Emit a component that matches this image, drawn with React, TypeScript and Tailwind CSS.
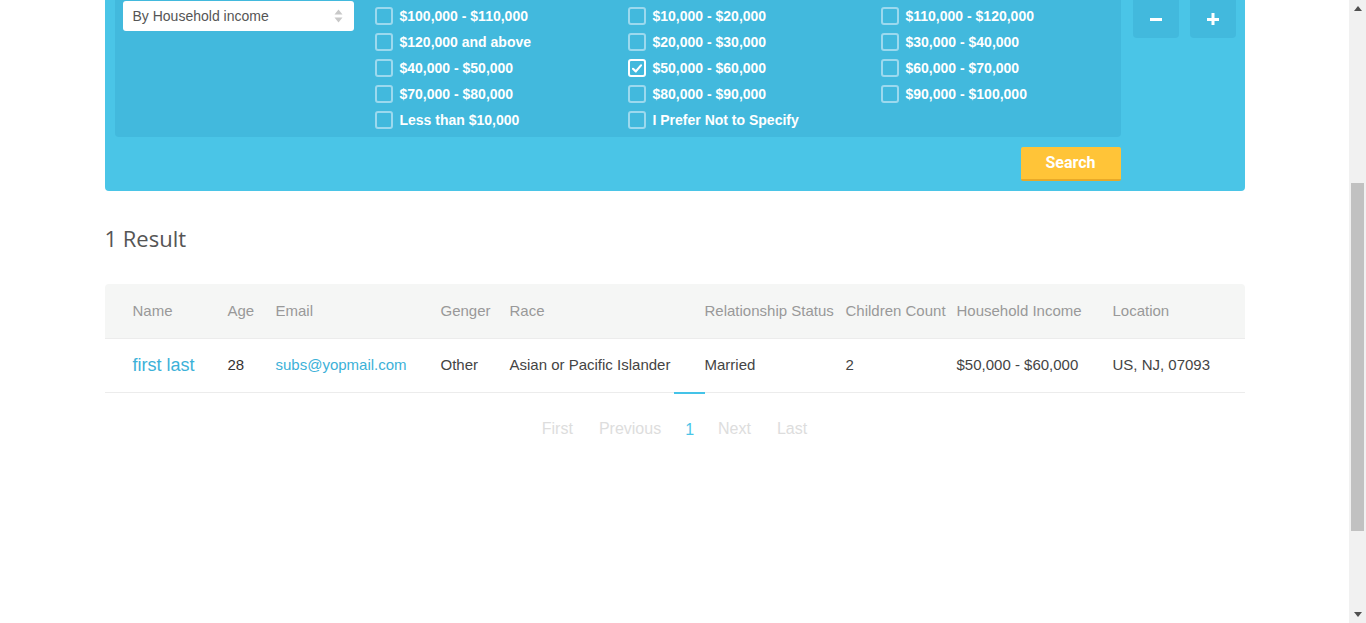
import React from 'react'

const INCOME_OPTIONS: { label: string; checked?: boolean }[] = [
  { label: '$100,000 - $110,000' },
  { label: '$10,000 - $20,000' },
  { label: '$110,000 - $120,000' },
  { label: '$120,000 and above' },
  { label: '$20,000 - $30,000' },
  { label: '$30,000 - $40,000' },
  { label: '$40,000 - $50,000' },
  { label: '$50,000 - $60,000', checked: true },
  { label: '$60,000 - $70,000' },
  { label: '$70,000 - $80,000' },
  { label: '$80,000 - $90,000' },
  { label: '$90,000 - $100,000' },
  { label: 'Less than $10,000' },
  { label: 'I Prefer Not to Specify' },
]

const COLUMNS = [
  'Name',
  'Age',
  'Email',
  'Genger',
  'Race',
  'Relationship Status',
  'Children Count',
  'Household Income',
  'Location',
]

const GRID = 'grid grid-cols-[95px_48px_165px_69px_195px_141px_111px_156px_1fr] pl-[28px]'

function Checkbox({ label, checked }: { label: string; checked?: boolean }) {
  return (
    <label className="flex items-center gap-[7px] h-[26px]">
      <span
        className={`w-[18px] h-[18px] rounded-[3px] border-2 flex items-center justify-center ${
          checked ? 'border-white' : 'border-[#9cd9ee]'
        }`}
      >
        {checked && (
          <svg width="10" height="9" viewBox="0 0 10 9">
            <path d="M1 4.8 L3.8 7.4 L9 1.4" stroke="white" strokeWidth="2.2" fill="none" strokeLinecap="round" strokeLinejoin="round" />
          </svg>
        )}
      </span>
      <span className="text-white font-bold text-[14px] leading-none">{label}</span>
    </label>
  )
}

function Scrollbar() {
  return (
    <div className="w-[17px] h-screen bg-[#f1f1f1] flex flex-col items-center shrink-0">
      <div className="h-[17px] w-full flex items-center justify-center">
        <svg width="8" height="5" viewBox="0 0 8 5">
          <path d="M0 5 L4 0 L8 5 Z" fill="#505050" />
        </svg>
      </div>
      <div className="h-[166px]" />
      <div className="w-[13px] h-[348px] bg-[#c1c1c1]" />
      <div className="flex-1" />
      <div className="h-[17px] w-full flex items-center justify-center">
        <svg width="8" height="5" viewBox="0 0 8 5">
          <path d="M0 0 L4 5 L8 0 Z" fill="#505050" />
        </svg>
      </div>
    </div>
  )
}

export default function App() {
  return (
    <div className="flex w-full h-screen overflow-hidden bg-white font-['Liberation_Sans',Arial,sans-serif]">
      <main className="flex-1 min-w-0">
        <div className="w-[1140px] mx-auto">
          {/* Filter panel */}
          <div className="bg-[#4ac5e7] rounded-b-[4px] pl-[10px] pr-[9px] pb-[10px]">
            <div className="flex gap-[12px]">
              <div className="w-[1006px]">
                <div className="bg-[#42b9dd] rounded-b-[4px] flex pl-[8px] pb-[4px]">
                  <div className="w-[231px] pt-[1px]">
                    <div className="h-[30px] bg-white rounded-[3px] flex items-center justify-between pl-[10px] pr-[11px] text-[14px] text-[#555]">
                      <span>By Household income</span>
                      <svg width="9" height="16" viewBox="0 0 9 16">
                        <path d="M0.5 6.5 L4.5 1.5 L8.5 6.5 Z" fill="#c8c8c8" />
                        <path d="M0.5 9.5 L4.5 14.5 L8.5 9.5 Z" fill="#c8c8c8" />
                      </svg>
                    </div>
                  </div>
                  <div className="ml-[21px] pt-[3px] grid grid-cols-[253px_253px_1fr] flex-1">
                    {INCOME_OPTIONS.map((o) => (
                      <Checkbox key={o.label} label={o.label} checked={o.checked} />
                    ))}
                  </div>
                </div>
                <div className="flex justify-end mt-[10px]">
                  <button className="w-[100px] h-[34px] bg-[#ffc438] border-b-2 border-[#e8a928] rounded-[2px] text-white font-bold text-[16px] font-['Roboto',Arial,sans-serif]">
                    Search
                  </button>
                </div>
              </div>
              <div className="flex gap-[11px]">
                <button className="w-[46px] h-[38px] bg-[#42b9dd] rounded-b-[4px] flex items-center justify-center">
                  <svg width="14" height="14" viewBox="0 0 14 14">
                    <rect x="1" y="6" width="12" height="3" fill="white" />
                  </svg>
                </button>
                <button className="w-[46px] h-[38px] bg-[#42b9dd] rounded-b-[4px] flex items-center justify-center">
                  <svg width="14" height="14" viewBox="0 0 14 14">
                    <rect x="1" y="6" width="12" height="3" fill="white" />
                    <rect x="5.5" y="1" width="3" height="12" fill="white" />
                  </svg>
                </button>
              </div>
            </div>
          </div>

          {/* Results */}
          <h2 className="mt-[34px] text-[22px] leading-[26px] text-[#555] font-['Open_Sans',sans-serif]">1 Result</h2>

          <div className="mt-[33px]">
            <div className={`${GRID} bg-[#f5f6f5] rounded-t-[4px] h-[54px] items-center text-[15px] text-[#999]`}>
              {COLUMNS.map((c) => (
                <div key={c} className="whitespace-nowrap">{c}</div>
              ))}
            </div>
            <div className={`${GRID} h-[55px] items-center border-t border-b border-[#ececec] text-[15px] text-[#444]`}>
              <div className="text-[18px] text-[#3cb1d8]">first last</div>
              <div className="text-[#333]">28</div>
              <div className="text-[#3cb1d8]">subs@yopmail.com</div>
              <div>Other</div>
              <div className="whitespace-nowrap">Asian or Pacific Islander</div>
              <div>Married</div>
              <div>2</div>
              <div className="whitespace-nowrap">$50,000 - $60,000</div>
              <div className="whitespace-nowrap">US, NJ, 07093</div>
            </div>
          </div>

          {/* Pagination */}
          <ul className="flex justify-center -mt-[1px] text-[16px] text-[#ddd]">
            <li className="px-[13px] pt-[23px] border-t-2 border-transparent">First</li>
            <li className="px-[13px] pt-[23px] border-t-2 border-transparent">Previous</li>
            <li className="px-[11px] pt-[24px] border-t-2 border-[#44c3e8] text-[#4ac5e8]">1</li>
            <li className="px-[13px] pt-[23px] border-t-2 border-transparent">Next</li>
            <li className="px-[13px] pt-[23px] border-t-2 border-transparent">Last</li>
          </ul>
        </div>
      </main>
      <Scrollbar />
    </div>
  )
}
